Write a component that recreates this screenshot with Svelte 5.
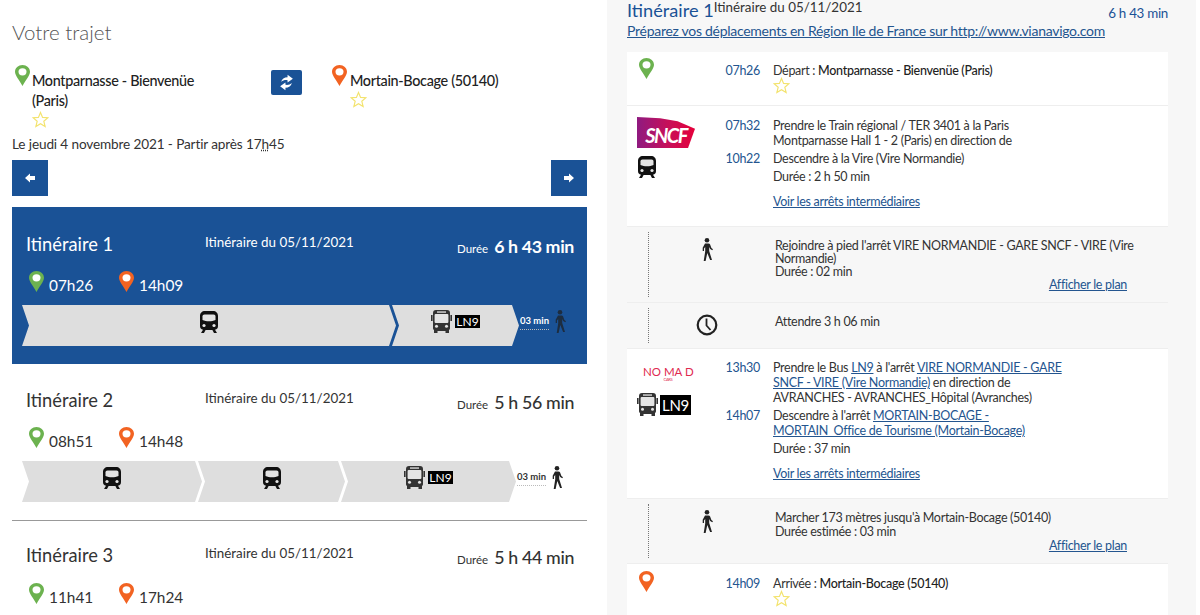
<script>
  const itineraries = [
    { name: "Itinéraire 1", duration: "6 h 43 min", from: "07h26", to: "14h09", active: true,
      legs: [{ type: "train", w: 374 }, { type: "bus", w: 127 }] },
    { name: "Itinéraire 2", duration: "5 h 56 min", from: "08h51", to: "14h48", active: false,
      legs: [{ type: "train", w: 180 }, { type: "train", w: 147 }, { type: "bus", w: 175 }] },
    { name: "Itinéraire 3", duration: "5 h 44 min", from: "11h41", to: "17h24", active: false, legs: [] },
  ];
</script>

{#snippet pin(color)}
  <svg class="pin" viewBox="0 0 15 23" preserveAspectRatio="none"><path fill={color} d="M7.5 0C3.3 0 0 3.3 0 7.4c0 4.3 4.6 9.6 7.5 15.6 2.9-6 7.5-11.3 7.5-15.6C15 3.3 11.7 0 7.5 0z" /><circle cx="7.5" cy="7.5" r="4" fill="#fff" /></svg>
{/snippet}

{#snippet star()}
  <svg class="star" viewBox="0 0 18 18"><path fill="none" stroke="#f3e36e" stroke-width="1.2" d="M9 1.5l2.2 5.3 5.6.4-4.3 3.6 1.4 5.6L9 13.4l-4.9 3 1.4-5.6-4.3-3.6 5.6-.4z" /></svg>
{/snippet}

{#snippet train()}
  <svg class="train" viewBox="0 0 18 22"><path fill="#111" d="M5 0h8c3 0 5 2 5 5v10c0 2-1 3.400-3 3.800l2 3.200h-3l-1.600-3H5.600L4 22H1l2-3.200C1 18.400 0 17 0 15V5c0-3 2-5 5-5z" /><path fill="#e4e4e4" d="M4.500 3.500h9c1.300 0 2 .8 2 2V9c-2 1-4 1.300-6.500 1.300S4.500 10 2.500 9V5.500c0-1.200.7-2 2-2z" /><circle cx="4" cy="14.500" r="1.600" fill="#e4e4e4" /><circle cx="14" cy="14.500" r="1.600" fill="#e4e4e4" /></svg>
{/snippet}

{#snippet bus()}
  <svg class="bus" viewBox="0 0 21 23"><path fill="#333" d="M5 0h11c2 0 3 1 3 3v15c0 1-.5 1.600-1 2v3h-3.500v-2h-8v2H3v-3c-.5-.4-1-1-1-2V3c0-2 1-3 3-3z" /><rect x="0" y="5" width="1.600" height="6" fill="#333" /><rect x="19.400" y="5" width="1.600" height="6" fill="#333" /><rect x="3.600" y="4" width="13.800" height="9" rx="1" fill="#e4e4e4" /><rect x="6" y="1.400" width="9" height="1.300" fill="#e4e4e4" /><circle cx="5.500" cy="16.300" r="1.500" fill="#e4e4e4" /><circle cx="15.500" cy="16.300" r="1.500" fill="#e4e4e4" /></svg>
{/snippet}

{#snippet walker(color)}
  <svg class="walker" viewBox="0 0 12 23"><circle cx="6" cy="2.300" r="2.300" fill={color} /><path fill={color} d="M4 5.500h3.500c.8 0 1.300.4 1.600 1l1.300 3.500 1.600 1.200-.8 1.100-2-1.400-1-2v4.200l2.800 9h-1.900L6.300 15l-1.700 8H2.700l1.500-9.500V9L3 10.500V13H1.700V9.800z" /></svg>
{/snippet}

{#snippet line9()}
  <span class="line">LN9</span>
{/snippet}

<div class="page">
  <section class="left">
    <h1>Votre trajet</h1>
    <div class="route">
      <div class="place start">
        {@render pin("#6cb24f")}
        <div>
          <div class="place-name">Montparnasse - Bienvenüe (Paris)</div>
          {@render star()}
        </div>
      </div>
      <button class="swap" aria-label="Inverser">
        <svg viewBox="0 0 16 16" width="17" height="17"><path fill="#fff" d="M3 7.500C3.500 4.500 6 3 9 3V.8l5 3.700L9 8V5.800C6.500 5.500 4.500 6 3 7.500zM13 8.500c-.5 3-3 4.500-6 4.500v2.200l-5-3.700L7 8v2.200c2.500.3 4.500-.2 6-1.700z" /></svg>
      </button>
      <div class="place">
        {@render pin("#f26322")}
        <div>
          <div class="place-name">Mortain-Bocage (50140)</div>
          {@render star()}
        </div>
      </div>
    </div>
    <p class="when">Le jeudi 4 novembre 2021 - Partir après 17<abbr>h</abbr>45</p>
    <div class="nav">
      <button aria-label="Précédent"><svg viewBox="0 0 10 10" width="10" height="10"><path fill="#fff" d="M0 5l5-4.500V3h5v4H5v2.500z" /></svg></button>
      <button aria-label="Suivant"><svg viewBox="0 0 10 10" width="10" height="10"><path fill="#fff" d="M10 5L5 .5V3H0v4h5v2.500z" /></svg></button>
    </div>

    {#each itineraries as it, i}
      <article class="itinerary" class:active={it.active} class:ruled={i === 1} class:last={i === 2}>
        <div class="it-head">
          <h2>{it.name}</h2>
          <div class="it-date">Itinéraire du 05/11/2021</div>
          <div class="it-duration"><span>Durée</span> <strong>{it.duration}</strong></div>
        </div>
        <div class="it-times">
          <span class="time">{@render pin("#6cb24f")}<span>{it.from}</span></span>
          <span class="time">{@render pin("#f26322")}<span>{it.to}</span></span>
        </div>
        {#if it.legs.length}
          <div class="legs">
            {#each it.legs as leg}
              <div class="leg" style="width: {leg.w}px">
                {#if leg.type === "train"}
                  {@render train()}
                {:else}
                  {@render bus()}{@render line9()}
                {/if}
              </div>
            {/each}
            <div class="walk-end">
              <span class="walk-time">03 min</span>
              {@render walker(it.active ? "#1d2d40" : "#222")}
            </div>
          </div>
        {/if}
      </article>
    {/each}
  </section>

  <section class="right">
    <header class="detail-head">
      <div class="detail-title">
        <h2>Itinéraire 1</h2>
        <span class="detail-date">Itinéraire du 05/11/2021</span>
        <span class="detail-duration">6 h 43 min</span>
      </div>
      <a href="#top" class="idf">Préparez vos déplacements en Région Ile de France sur http://www.vianavigo.com</a>
    </header>

    <div class="steps">
      <div class="step white endpoint first">
        <div class="logo">{@render pin("#6cb24f")}</div>
        <div class="times"><div>07h26</div></div>
        <div class="txt">
          <div>Départ : <b>Montparnasse - Bienvenüe (Paris)</b></div>
          {@render star()}
        </div>
      </div>

      <div class="step white ride sncf-row">
        <div class="logo">
          <div class="sncf"><span>SNCF</span></div>
          {@render train()}
        </div>
        <div class="rows">
          <div class="ride-line"><time>07h32</time><div>Prendre le Train régional / TER 3401 à la Paris Montparnasse Hall 1 - 2 (Paris) en direction de</div></div>
          <div class="ride-line"><time>10h22</time><div>Descendre à la Vire (Vire Normandie)</div></div>
          <div class="ride-line"><time></time><div>Durée : 2 h 50 min</div></div>
          <div class="ride-line more"><time></time><a href="#top">Voir les arrêts intermédiaires</a></div>
        </div>
      </div>

      <div class="step grey transfer walk-one">
        <div class="dots"></div>
        <div class="mid">{@render walker("#222")}</div>
        <div class="note">
          <div>Rejoindre à pied l'arrêt VIRE NORMANDIE - GARE SNCF - VIRE (Vire Normandie)</div>
          <div>Durée : 02 min</div>
          <a href="#top" class="plan">Afficher le plan</a>
        </div>
      </div>

      <div class="step grey transfer wait">
        <div class="dots"></div>
        <div class="mid">
          <svg class="clock" viewBox="0 0 22 22"><circle cx="11" cy="11" r="9.300" fill="none" stroke="#222" stroke-width="2.200" /><path fill="none" stroke="#222" stroke-width="1.800" d="M10.500 4.500V11.500l4 4.500" /></svg>
        </div>
        <div class="note">Attendre 3 h 06 min</div>
      </div>

      <div class="step white ride nomad-row">
        <div class="logo">
          <div class="nomad"><span>NO MA D</span><small>CARS</small></div>
          <div class="bus-line">{@render bus()}{@render line9()}</div>
        </div>
        <div class="rows">
          <div class="ride-line"><time>13h30</time><div>Prendre le Bus <a href="#top">LN9</a> à l'arrêt <a href="#top">VIRE NORMANDIE - GARE SNCF - VIRE (Vire Normandie)</a> en direction de AVRANCHES - AVRANCHES_Hôpital (Avranches)</div></div>
          <div class="ride-line"><time>14h07</time><div>Descendre à l'arrêt <a href="#top">MORTAIN-BOCAGE - MORTAIN_Office de Tourisme (Mortain-Bocage)</a></div></div>
          <div class="ride-line"><time></time><div>Durée : 37 min</div></div>
          <div class="ride-line more"><time></time><a href="#top">Voir les arrêts intermédiaires</a></div>
        </div>
      </div>

      <div class="step grey transfer walk-two">
        <div class="dots"></div>
        <div class="mid">{@render walker("#222")}</div>
        <div class="note">
          <div>Marcher 173 mètres jusqu'à Mortain-Bocage (50140)</div>
          <div>Durée estimée : 03 min</div>
          <a href="#top" class="plan">Afficher le plan</a>
        </div>
      </div>

      <div class="step white endpoint arrival">
        <div class="logo">{@render pin("#f26322")}</div>
        <div class="times"><div>14h09</div></div>
        <div class="txt">
          <div>Arrivée : <b>Mortain-Bocage (50140)</b></div>
          {@render star()}
        </div>
      </div>
    </div>
  </section>
</div>

<style>
  :global(body) {
    margin: 0;
    background: #fff;
    overflow: hidden;
  }
  .page {
    display: grid;
    grid-template-columns: 607px 589px;
    height: 615px;
    overflow: hidden;
    font-family: Lato, "Open Sans", sans-serif;
    font-size: 13px;
    color: #333;
  }
  svg {
    display: block;
    flex: none;
  }
  a {
    color: #24558f;
    text-decoration: underline;
  }
  h1, h2, p {
    margin: 0;
    font-weight: 400;
  }

  /* left column */
  .left {
    padding-left: 12px;
    width: 575px;
  }
  h1 {
    font-size: 20.5px;
    font-weight: 300;
    line-height: 26px;
    padding-top: 19px;
    color: #555;
  }
  .route {
    display: grid;
    grid-template-columns: 256px 61px 1fr;
    margin-top: 20px;
    padding-left: 3px;
  }
  .place {
    display: flex;
    align-items: flex-start;
  }
  .pin {
    width: 15px;
    height: 21px;
  }
  .place .pin {
    margin-right: 3px;
  }
  .place.start .pin {
    margin-right: 2px;
  }
  .place > div {
    padding-top: 6px;
  }
  .place-name {
    font-size: 14.400px;
    letter-spacing: -0.33px;
    line-height: 20px;
    color: #222;
    font-weight: 500;
  }
  .start .place-name {
    width: 180px;
  }
  .star {
    width: 17px;
    height: 17px;
  }
  .swap {
    width: 31px;
    height: 25px;
    margin-top: 5px;
    border: 0;
    padding: 0;
    border-radius: 2px;
    background: #1a5296;
    display: flex;
    align-items: center;
    justify-content: center;
  }
  .when {
    font-size: 13.600px;
    letter-spacing: -0.13px;
    line-height: 18px;
    margin-top: 7px;
  }
  abbr {
    text-decoration: underline dotted;
  }
  .nav {
    display: flex;
    justify-content: space-between;
    margin-top: 7px;
    margin-bottom: 11px;
  }
  .nav button {
    width: 36px;
    height: 36px;
    border: 0;
    padding: 0;
    background: #1a5296;
    display: flex;
    align-items: center;
    justify-content: center;
  }

  .itinerary {
    height: 157px;
    box-sizing: border-box;
    padding: 26px 13px 0 10px;
  }
  .itinerary.active {
    background: #1a5296;
    color: #fff;
  }
  .itinerary.ruled {
    border-bottom: 1px solid #999;
    padding-top: 25px;
  }
  .itinerary.last {
    padding-top: 23px;
  }
  .it-head {
    display: grid;
    grid-template-columns: 179px 1fr auto;
    padding-left: 4px;
  }
  .it-head h2 {
    font-size: 18.300px;
    line-height: 22px;
  }
  .it-date {
    font-size: 13.400px;
    line-height: 18px;
  }
  .it-duration {
    font-size: 11.500px;
    line-height: 26px;
  }
  .it-duration span {
    margin-right: 3px;
  }
  .it-duration strong {
    font-size: 17.800px;
    font-weight: 500;
    letter-spacing: -0.35px;
  }
  .active .it-duration strong {
    font-weight: 700;
  }
  .it-times {
    display: flex;
    margin-top: 9px;
    padding-left: 7px;
    font-size: 15.400px;
  }
  .last .it-times {
    margin-top: 10px;
  }
  .time {
    display: flex;
    width: 90px;
  }
  .time span {
    padding: 5px 0 0 5px;
    line-height: 18px;
  }
  .legs {
    display: flex;
    align-items: center;
    margin-top: 11px;
  }
  .leg {
    height: 41px;
    box-sizing: border-box;
    padding-bottom: 8px;
    margin-right: -4px;
    background: #dedede;
    clip-path: polygon(0 0, calc(100% - 7px) 0, 100% 50%, calc(100% - 7px) 100%, 0 100%, 7px 50%);
    display: flex;
    align-items: center;
    justify-content: center;
    gap: 3px;
    flex: none;
  }
  .train {
    width: 18px;
    height: 22px;
  }
  .bus {
    width: 21px;
    height: 23px;
  }
  .line {
    background: #000;
    color: #fff;
    font-size: 12px;
    line-height: 13px;
    padding: 0 1.500px;
  }
  .walk-end {
    display: flex;
    align-items: center;
    margin-left: 5px;
    padding-bottom: 8px;
    gap: 5px;
  }
  .walk-time {
    font-size: 9.500px;
    font-weight: 700;
    line-height: 13px;
    border-bottom: 1px dotted #bbb;
    padding-bottom: 2px;
    color: #333;
  }
  .active .walk-time {
    color: #fff;
  }
  .walker {
    width: 12px;
    height: 23px;
  }

  /* right column */
  .right {
    background: #f7f7f7;
    padding-left: 20px;
  }
  .detail-head {
    width: 541px;
    height: 52px;
  }
  .detail-title {
    display: flex;
    align-items: flex-start;
    height: 23px;
  }
  .detail-title h2 {
    font-size: 18.200px;
    line-height: 20px;
    color: #1a5296;
  }
  .detail-date {
    font-size: 13.400px;
    line-height: 14px;
    color: #333;
  }
  .detail-duration {
    margin-left: auto;
    font-size: 13.400px;
    letter-spacing: -0.3px;
    line-height: 26px;
    color: #1a5296;
  }
  .idf {
    font-size: 14px;
    letter-spacing: -0.28px;
    line-height: 20px;
    display: block;
    margin-top: -2px;
  }
  .steps {
    width: 541px;
    font-size: 12.500px;
    letter-spacing: -0.3px;
  }
  .step {
    box-sizing: border-box;
    border-top: 1px solid #eee;
  }
  .step.first {
    border-top: 0;
  }
  .white {
    background: #fff;
  }
  .endpoint {
    display: grid;
    grid-template-columns: 61px 60px 1fr;
    padding: 7px 0 0 12px;
    height: 53px;
  }
  .endpoint.arrival {
    padding-top: 8px;
  }
  .endpoint .logo {
    margin-top: -1px;
  }
  .endpoint .txt {
    padding-left: 13px;
  }
  .endpoint .star {
    margin-top: -3px;
  }
  .times div, time {
    color: #24558f;
    text-align: right;
    display: block;
  }
  .times div {
    line-height: 18px;
    padding-top: 3px;
  }
  .txt > div {
    line-height: 18px;
    padding-top: 3px;
  }
  b {
    font-weight: 500;
    color: #222;
  }
  .ride {
    display: grid;
    grid-template-columns: 73px 1fr;
    padding-left: 10px;
  }
  .sncf-row {
    height: 121px;
    padding-top: 12px;
  }
  .nomad-row {
    height: 150px;
    padding-top: 11px;
  }
  .rows {
    width: 400px;
    margin-left: -10px;
  }
  .ride-line {
    display: grid;
    grid-template-columns: 60px 290px;
    column-gap: 13px;
    line-height: 15px;
    margin-bottom: 3px;
  }
  .more {
    margin-top: 10px;
  }
  .sncf {
    width: 58px;
    height: 31px;
    margin-top: -1px;
    background: linear-gradient(90deg, #8f1a80, #c80f58 55%, #e5003a);
    clip-path: polygon(0 0, 40% 4%, 70% 14%, 100% 38%, 88% 100%, 0 100%);
    display: flex;
    align-items: center;
    justify-content: center;
    margin-bottom: 8px;
  }
  .sncf span {
    color: #fff;
    font-size: 20px;
    font-style: italic;
    font-weight: 700;
    letter-spacing: -1.5px;
    padding-top: 4px;
  }
  .sncf-row .train {
    margin-left: 1px;
  }
  .nomad {
    width: 50px;
    margin: 7px 0 10px 6px;
    text-align: center;
    color: #e0294f;
    line-height: 10px;
  }
  .nomad span {
    display: block;
    font-size: 11.500px;
    letter-spacing: 0;
    font-weight: 400;
    white-space: nowrap;
  }
  .nomad small {
    display: block;
    font-size: 4px;
    line-height: 6px;
  }
  .bus-line {
    display: flex;
    align-items: center;
    gap: 2px;
  }
  .bus-line .line {
    font-size: 15px;
    line-height: 20px;
    padding: 0 2px;
  }
  .grey {
    background: #f7f7f7;
  }
  .transfer {
    display: grid;
    grid-template-columns: 22px 73px 1fr;
    padding: 5px 0 5px 21px;
  }
  .walk-one {
    height: 76px;
  }
  .wait {
    height: 46px;
  }
  .walk-two {
    height: 65px;
  }
  .dots {
    border-left: 1px dotted #777;
  }
  .mid {
    display: flex;
    justify-content: center;
    padding-top: 6px;
  }
  .mid svg.clock {
    width: 22px;
    height: 22px;
  }
  .note {
    line-height: 13px;
    padding-top: 7px;
    margin-left: 32px;
    width: 366px;
  }
  .walk-two .note {
    line-height: 14px;
  }
  .plan {
    display: block;
    text-align: right;
    width: 352px;
    line-height: 14px;
  }
</style>
